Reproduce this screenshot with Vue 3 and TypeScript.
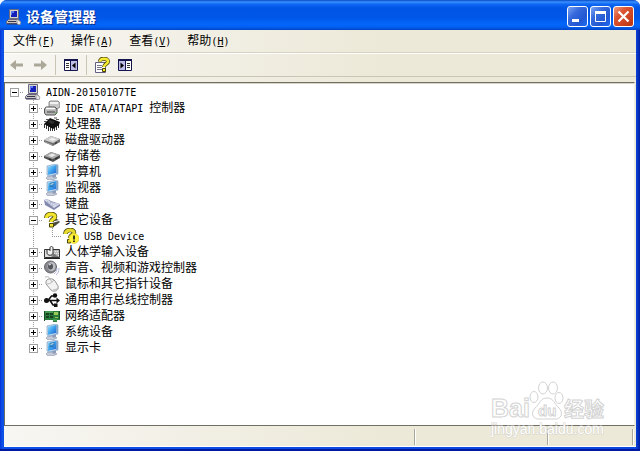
<script setup lang="ts">
import { computed, ref } from 'vue'

interface Device {
  id: number
  level: number
  icon: string
  latin?: string
  label?: string
  expandable: boolean
  parent?: number
}

const devices: Device[] = [
  { id: 0, level: 0, icon: 'pc', latin: 'AIDN-20150107TE', expandable: true },
  { id: 1, level: 1, icon: 'ide', latin: 'IDE ATA/ATAPI ', label: '控制器', expandable: true, parent: 0 },
  { id: 2, level: 1, icon: 'cpu', label: '处理器', expandable: true, parent: 0 },
  { id: 3, level: 1, icon: 'disk', label: '磁盘驱动器', expandable: true, parent: 0 },
  { id: 4, level: 1, icon: 'volume', label: '存储卷', expandable: true, parent: 0 },
  { id: 5, level: 1, icon: 'computer', label: '计算机', expandable: true, parent: 0 },
  { id: 6, level: 1, icon: 'monitor', label: '监视器', expandable: true, parent: 0 },
  { id: 7, level: 1, icon: 'keyboard', label: '键盘', expandable: true, parent: 0 },
  { id: 8, level: 1, icon: 'other', label: '其它设备', expandable: true, parent: 0 },
  { id: 9, level: 2, icon: 'unknown', latin: 'USB Device', expandable: false, parent: 8 },
  { id: 10, level: 1, icon: 'hid', label: '人体学输入设备', expandable: true, parent: 0 },
  { id: 11, level: 1, icon: 'sound', label: '声音、视频和游戏控制器', expandable: true, parent: 0 },
  { id: 12, level: 1, icon: 'mouse', label: '鼠标和其它指针设备', expandable: true, parent: 0 },
  { id: 13, level: 1, icon: 'usb', label: '通用串行总线控制器', expandable: true, parent: 0 },
  { id: 14, level: 1, icon: 'network', label: '网络适配器', expandable: true, parent: 0 },
  { id: 15, level: 1, icon: 'computer', label: '系统设备', expandable: true, parent: 0 },
  { id: 16, level: 1, icon: 'monitor', label: '显示卡', expandable: true, parent: 0 },
]

const menus = [
  { label: '文件', key: 'F' },
  { label: '操作', key: 'A' },
  { label: '查看', key: 'V' },
  { label: '帮助', key: 'H' },
]

const open = ref<number[]>([0, 8])

function isOpen(id: number): boolean {
  return open.value.includes(id)
}

function toggle(id: number): void {
  open.value = isOpen(id) ? open.value.filter((n) => n !== id) : [...open.value, id]
}

const visible = computed(() =>
  devices.filter((d) => {
    if (d.level === 0) return true
    if (d.level === 1) return isOpen(0)
    return isOpen(0) && isOpen(d.parent ?? 0)
  }),
)
</script>

<template>
  <div class="window">
    <svg class="defs" aria-hidden="true">
      <defs>
        <linearGradient id="screen" x1="0" y1="0" x2="1" y2="1">
          <stop offset="0" stop-color="#9be0fb" />
          <stop offset=".5" stop-color="#3fa4ee" />
          <stop offset="1" stop-color="#1d62cf" />
        </linearGradient>
        <symbol id="pc" viewBox="0 0 16 16">
          <path d="M3.500 .500h9v9h-9z" fill="#d8d5cc" stroke="#6c6a80" />
          <path d="M5 2h6v6H5z" fill="#1420b8" />
          <path d="M5 2h3v2H6v2H5z" fill="#5a78ef" />
          <path d="M2.500 10.500h10l1 2v2H.500v-2z" fill="#c9c6c4" stroke="#66647c" />
          <path d="M2 12.500h8M1 15h12" stroke="#38364f" />
          <path d="M11 10l4 3-1 3-3-1z" fill="#e6e4e4" stroke="#77757e" stroke-width=".6" />
        </symbol>
        <symbol id="ide" viewBox="0 0 16 16">
          <path d="M5 2l1-1h8l2 2v4l-3 2H5z" fill="#c9c9c9" stroke="#777" stroke-width=".8" />
          <path d="M6 3h8" stroke="#fff" stroke-width="1.500" />
          <path d="M2 7h9l2 2v4l-2 2H2L.5 13V9z" fill="#b5b5b5" stroke="#555" />
          <path d="M2 8.500h9" stroke="#fff" stroke-width="1.500" />
          <path d="M3 12h8" stroke="#565656" stroke-width="1.200" />
          <path d="M11 13h2" stroke="#5a9a52" />
        </symbol>
        <symbol id="cpu" viewBox="0 0 16 16">
          <path d="M.5 8v4M2.500 9v4M4.500 10v5M6.500 11v4M8.500 11v4M10.500 10v5M12.500 9v5M14.500 7v5" stroke="#333" />
          <path d="M6 2l10 4-1 3-6 4-9-5z" fill="#111" />
          <path d="M6 4l5 2-3 2-4-2z" fill="#303030" />
          <path d="M0 5.500h3M2 3.500h3M12 3.500h3M10 2h3" stroke="#555" />
        </symbol>
        <symbol id="disk" viewBox="0 0 16 16">
          <path d="M0 8l7-4 9 3v3l-7 4-9-4z" fill="#6f6f6f" />
          <path d="M0 8l7-4 9 3-7 4z" fill="#d0d0d0" />
          <path d="M5 7.500l3-1.500 4 1.300-3 1.500z" fill="#f4f4f4" />
          <path d="M1 10l7 3" stroke="#a0a0a0" />
          <path d="M11 11.500l2-1" stroke="#222" />
        </symbol>
        <symbol id="volume" viewBox="0 0 16 16">
          <path d="M0 8l7-4 9 3v3l-7 4-9-4z" fill="#505050" />
          <path d="M0 8l7-4 9 3-7 4z" fill="#aaa" />
          <path d="M4 7.500l4-2 4 1.600-4 2z" fill="#e9e9e9" />
          <path d="M5 11l2 1M11 11l3-1.500" stroke="#202020" />
        </symbol>
        <symbol id="computer" viewBox="0 0 16 16">
          <path d="M4 12h6l3 2-4 2H4l-2-2z" fill="#c5cbd9" stroke="#8991a6" stroke-width=".6" />
          <path d="M8 11l4-2v4l-3 1z" fill="#909db8" />
          <path d="M3 2l9-2 2 1v9L5 12l-2-1z" fill="#c9dcef" stroke="#6c94be" stroke-width=".6" />
          <path d="M4 2.700l8-1.700v8L4 10.700z" fill="url(#screen)" />
          <path d="M12 1l2 .5v8L12 10z" fill="#7fa6cf" />
        </symbol>
        <symbol id="monitor" viewBox="0 0 16 16">
          <path d="M4 12h6l3 2-4 2H4l-2-2z" fill="#c5cbd9" stroke="#8991a6" stroke-width=".6" />
          <path d="M8 11l4-2v4l-3 1z" fill="#909db8" />
          <path d="M3 2l9-2 2 1v9L5 12l-2-1z" fill="#c9dcef" stroke="#6c94be" stroke-width=".6" />
          <path d="M4 2.700l8-1.700v8L4 10.700z" fill="url(#screen)" />
          <path d="M6 3.500l4-1v2l-4 1zM5 7l5-1" fill="#d8f3ff" stroke="#1867a7" stroke-width=".8" />
          <path d="M12 1l2 .5v8L12 10z" fill="#7fa6cf" />
        </symbol>
        <symbol id="keyboard" viewBox="0 0 16 16">
          <path d="M0 4l3-1 4 2 9 3v2l-6 4-9-5z" fill="#8389ac" />
          <path d="M0 4l3-1 4 3 9 2-6 4z" fill="#d8dcec" />
          <path d="M3 5.500l7 4.500M2 6l7 5M6 6l7 3" stroke="#8a90ad" stroke-width=".8" stroke-dasharray="1 1" />
        </symbol>
        <symbol id="other" viewBox="0 0 16 16">
          <path d="M8 11l7-2 1 1-5 4-4 1zM10 6l5 2-4 1z" fill="#4d4d42" />
          <path d="M2.500 6c0-5 8.500-5 8.500-1.500 0 3-4 2.500-4 5.500" fill="none" stroke="#4a4400" stroke-width="4.600" />
          <path d="M2.500 6c0-5 8.500-5 8.500-1.500 0 3-4 2.500-4 5.500" fill="none" stroke="#f3e52e" stroke-width="3.200" />
          <path d="M5.500 11.500h4v3.500h-4z" fill="#f3e52e" stroke="#4a4400" />
        </symbol>
        <symbol id="unknown" viewBox="0 0 16 16">
          <path d="M2.500 6c0-5 8.500-5 8.500-1.500 0 3-4 2.500-4 5.500" fill="none" stroke="#4a4400" stroke-width="4.600" />
          <path d="M2.500 6c0-5 8.500-5 8.500-1.500 0 3-4 2.500-4 5.500" fill="none" stroke="#e6d92f" stroke-width="3.200" />
          <path d="M4.500 11.500h3V15h-3z" fill="#e6d92f" stroke="#4a4400" />
          <circle cx="11" cy="10.500" r="5" fill="#fff23a" stroke="#d1c126" stroke-width=".6" />
          <path d="M11 7.500v4M11 12.500v1.500" stroke="#111" stroke-width="1.600" />
        </symbol>
        <symbol id="hid" viewBox="0 0 16 16">
          <path d="M.5 5.500h15v8H.5z" fill="#b7b7b7" stroke="#333" />
          <path d="M9 7.500h6M10 9.500h5M12 11.500h3" stroke="#eee" stroke-dasharray="1 1" />
          <path d="M9 9l6 4H8z" fill="#777" />
          <path d="M1 6h6v7H1z" fill="#dedede" />
          <path d="M3 6v3c0 3 6 3 6 0V4c0-2-3-2-3 0v3" fill="#f1f1f1" stroke="#333" />
          <path d="M0 14.500h16" stroke="#222" />
        </symbol>
        <symbol id="sound" viewBox="0 0 16 16">
          <ellipse cx="6.500" cy="7" rx="6" ry="6" fill="#85858c" stroke="#66666b" />
          <ellipse cx="7.500" cy="6.500" rx="4" ry="4.500" fill="#bdbdc4" />
          <ellipse cx="6.500" cy="6.500" rx="2.500" ry="3" fill="#55555c" />
          <path d="M5 5l2-1" stroke="#fff" />
          <path d="M13 8c0 3-1 4-3 6M15 8c0 4-1 5-3 7" fill="none" stroke="#b5b5dc" />
        </symbol>
        <symbol id="mouse" viewBox="0 0 16 16">
          <path d="M1 1c4-1 5 1 5 3" fill="none" stroke="#b5b5b5" />
          <path d="M2 5c2-3 7-3 9 0l3 5c2 4-4 7-7 4L2 8z" fill="#f2f2f2" stroke="#999" />
          <path d="M3 8c3 0 6-2 7-4M6 3l2 3" fill="none" stroke="#aaa" stroke-width=".8" />
          <path d="M9 14c3 0 5-1 5-3" stroke="#c3c3c3" fill="none" stroke-width="1.500" />
        </symbol>
        <symbol id="usb" viewBox="0 0 16 16">
          <path d="M1 8.500h13M4 8.500L7.500 4H11M6 8.500L9 13h3" fill="none" stroke="#111" stroke-width="1.600" />
          <circle cx="2.500" cy="8.500" r="2.500" fill="#111" />
          <path d="M12.500 5.500L16 8.500l-3.500 3zM10 11.500h3.500V15H10z" fill="#111" />
          <circle cx="11" cy="3.500" r="2.200" fill="#111" />
        </symbol>
        <symbol id="network" viewBox="0 0 16 16">
          <path d="M0 3h16v9h-3v2H9v-2H0z" fill="#287b3b" />
          <path d="M2 5h3v2H2zM6 5h3v2H6zM2 8h3v2H2zM6 8h3v2H6z" fill="#173f20" />
          <path d="M10 4h4v3h-4zM11 9h3v1h-3z" fill="#9ac85a" />
          <path d="M1 4h8M9 12h4" stroke="#65b968" />
          <path d="M.5 3v10M15.500 3v8" stroke="#174f22" />
        </symbol>
      </defs>
    </svg>

    <header class="titlebar">
      <svg class="icon"><use href="#pc" /></svg>
      <h1 class="title">设备管理器</h1>
      <div class="controls">
        <button class="control" type="button" aria-label="最小化">
          <svg viewBox="0 0 19 19"><path d="M4 12h7v3H4z" fill="#fff" /></svg>
        </button>
        <button class="control" type="button" aria-label="最大化">
          <svg viewBox="0 0 19 19">
            <path d="M4.500 4.500h10v10h-10z" fill="none" stroke="#fff" />
            <path d="M4 4h11v3H4z" fill="#fff" />
          </svg>
        </button>
        <button class="control close" type="button" aria-label="关闭">
          <svg viewBox="0 0 19 19"><path d="M4.500 4.500l10 10M14.500 4.500l-10 10" stroke="#fff" stroke-width="2.200" /></svg>
        </button>
      </div>
    </header>

    <div class="client">
      <nav class="menubar">
        <button v-for="menu in menus" :key="menu.key" class="menu" type="button">
          {{ menu.label }}<span class="latin">(<u>{{ menu.key }}</u>)</span>
        </button>
      </nav>

      <div class="toolbar" role="toolbar">
        <button class="tool" type="button" aria-label="后退" disabled>
          <svg viewBox="0 0 16 16"><path d="M1 8l6-5v3.500h7v3H7V13z" fill="#aca899" /></svg>
        </button>
        <button class="tool" type="button" aria-label="前进" disabled>
          <svg viewBox="0 0 16 16"><path d="M15 8L9 3v3.500H2v3h7V13z" fill="#aca899" /></svg>
        </button>
        <span class="divider"></span>
        <button class="tool" type="button" aria-label="显示树">
          <svg viewBox="0 0 16 16">
            <path d="M1.500 2.500h13v11h-13z" fill="#fff" stroke="#15154e" />
            <path d="M1 2h14v2H1z" fill="#15154e" />
            <path d="M8 4h6v9H8z" fill="#bdbde6" />
            <path d="M7.500 4v9" stroke="#15154e" />
            <path d="M3 6.500h3M3 8.500h3M3 10.500h3" stroke="#333" />
            <path d="M12.500 5.500v6L9 8.500z" fill="#000" />
          </svg>
        </button>
        <span class="divider"></span>
        <button class="tool" type="button" aria-label="帮助">
          <svg viewBox="0 0 16 16">
            <path d="M1.500 5.500h10v10h-10z" fill="#fff" stroke="#625f82" />
            <path d="M3 8.500h5M3 10.500h5M3 12.500h7" stroke="#77748b" />
            <path d="M6 4.500c0-4 8-3.500 8 0 0 2.500-4 2.500-4 5.500" fill="none" stroke="#4a4400" stroke-width="4" />
            <path d="M6 4.500c0-4 8-3.500 8 0 0 2.500-4 2.500-4 5.500" fill="none" stroke="#f5e934" stroke-width="2.500" />
            <path d="M8.500 11.500h3v3h-3z" fill="#f5e934" stroke="#4a4400" />
          </svg>
        </button>
        <button class="tool" type="button" aria-label="操作窗格">
          <svg viewBox="0 0 16 16">
            <path d="M1.500 2.500h13v11h-13z" fill="#fff" stroke="#15154e" />
            <path d="M1 2h14v2H1z" fill="#15154e" />
            <path d="M2 4h6v9H2z" fill="#bdbde6" />
            <path d="M8.500 4v9" stroke="#15154e" />
            <path d="M10 6.500h3M10 8.500h3M10 10.500h3" stroke="#333" />
            <path d="M3.500 5.500v6L7 8.500z" fill="#000" />
          </svg>
        </button>
      </div>

      <main class="pane">
        <ul class="tree" role="tree">
          <li
            v-for="(device, index) in visible"
            :key="device.id"
            class="row"
            role="treeitem"
            :aria-level="device.level + 1"
          >
            <span v-if="device.level > 0" class="cell"></span>
            <span v-if="device.level > 1" class="cell rail"></span>
            <span
              class="cell branch"
              :class="{ rail: device.level === 1, last: index === visible.length - 1 || device.level === 2 }"
            >
              <button
                v-if="device.expandable"
                class="expander"
                :class="{ collapsed: !isOpen(device.id) }"
                type="button"
                :aria-label="isOpen(device.id) ? '折叠' : '展开'"
                @click="toggle(device.id)"
              ></button>
            </span>
            <svg class="icon"><use :href="'#' + device.icon" /></svg>
            <span class="name"><span v-if="device.latin" class="latin">{{ device.latin }}</span>{{ device.label }}</span>
          </li>
        </ul>
      </main>

      <footer class="status">
        <span class="panel wide"></span>
        <span class="panel medium"></span>
        <span class="panel small"></span>
      </footer>
    </div>

    <svg class="watermark" viewBox="0 0 120 60">
      <g class="mark">
        <text class="brand" x="0" y="37">Bai</text>
        <ellipse cx="43" cy="17" rx="4" ry="5.500" />
        <ellipse cx="52" cy="8" rx="4.500" ry="6" />
        <ellipse cx="62" cy="8" rx="4.500" ry="6" />
        <ellipse cx="68" cy="18" rx="4" ry="5.500" />
        <path d="M56 18c-7 0-7 6-12 10-5 5-2 12 5 11h14c7 1 10-6 5-11-5-4-5-10-12-10z" />
        <text class="du" x="47" y="36">du</text>
        <text class="suffix" x="73" y="37">经验</text>
      </g>
      <text class="site" x="0" y="54">jingyan.baidu.com</text>
    </svg>
  </div>
</template>

<style>
body {
  background: #f3f8ff;
}
</style>

<style scoped>
.window {
  position: relative;
  display: flex;
  flex-direction: column;
  box-sizing: border-box;
  min-height: 100vh;
  padding: 0 4px 4px;
  border-radius: 7px 7px 0 0;
  background: linear-gradient(90deg, #0831d9 0, #0c50e6 2px, #0c50e6 4px, #0c45dc calc(100% - 4px), #001ea0 100%);
  box-shadow: inset 0 -2px #0019a0;
  font-family: "Liberation Sans", "Noto Sans CJK SC", sans-serif;
  font-size: 12px;
  line-height: 16px;
  color: #000;
}
.defs {
  position: absolute;
  width: 0;
  height: 0;
}
.icon {
  flex: none;
  width: 16px;
  height: 16px;
}
.latin {
  font-family: "DejaVu Sans Mono", monospace;
  font-size: 10px;
  white-space: pre;
}
.titlebar {
  display: flex;
  align-items: center;
  box-sizing: border-box;
  height: 30px;
  margin: 0 -4px;
  padding: 3px 6px 0;
  border-radius: 7px 7px 0 0;
  background: linear-gradient(#0848c4 0, #3b91ff 2px, #1069f4 4px, #0055e5 8px, #0057e8 18px, #0466fb 24px, #0360f2 27px, #0144c5 30px);
}
.title {
  flex: 1;
  margin: 0 0 0 4px;
  font-size: 14px;
  font-weight: 700;
  line-height: 20px;
  color: #fff;
  text-shadow: 1px 1px #0b2f8c;
}
.controls {
  display: flex;
  gap: 2px;
}
.control {
  box-sizing: border-box;
  width: 21px;
  height: 21px;
  padding: 0;
  border: 1px solid #fff;
  border-radius: 3px;
  background: linear-gradient(135deg, #7ba4f5 0, #3569dc 35%, #2257d2 70%, #1b6cf5 100%);
}
.control svg {
  display: block;
  width: 19px;
  height: 19px;
}
.close {
  background: linear-gradient(135deg, #ee9c80 0, #dc5432 35%, #c8401d 75%, #b9340f 100%);
}
.client {
  display: flex;
  flex: 1;
  flex-direction: column;
  background: linear-gradient(90deg, #f7f6f2, #ece9d8 60%);
}
.menubar {
  display: flex;
  height: 22px;
  padding-left: 1px;
  border-bottom: 1px solid #d5d2c2;
}
.menu {
  padding: 0 8px;
  border: 0;
  background: none;
  font: inherit;
  color: inherit;
}
.toolbar {
  display: flex;
  align-items: center;
  height: 22px;
  padding-left: 5px;
  border-top: 1px solid #fff;
  border-bottom: 1px solid #cac6b5;
}
.tool {
  width: 16px;
  height: 16px;
  margin-right: 7px;
  padding: 0;
  border: 0;
  background: none;
}
.tool svg {
  display: block;
  width: 16px;
  height: 16px;
}
.divider {
  width: 1px;
  height: 20px;
  margin-right: 7px;
  background: #cac6b5;
}
.pane {
  flex: 1;
  margin: 5px 1px 0 0;
  border: 1px solid #716f64;
  border-right-color: #f1efe2;
  background: #fff;
  box-shadow: inset 0 1px #d8d5c8;
}
.tree {
  margin: 0;
  padding: 1px 0;
  list-style: none;
}
.row {
  display: flex;
  align-items: center;
  height: 16px;
}
.cell {
  display: grid;
  flex: none;
  place-items: center;
  width: 19px;
  height: 16px;
}
.branch {
  background: repeating-linear-gradient(90deg, #999 0 1px, transparent 1px 2px) 9px 8px / 10px 1px no-repeat;
}
.rail {
  background: repeating-linear-gradient(#999 0 1px, transparent 1px 2px) 9px 0 / 1px 16px no-repeat;
}
.branch.rail {
  background:
    repeating-linear-gradient(90deg, #999 0 1px, transparent 1px 2px) 9px 8px / 10px 1px no-repeat,
    repeating-linear-gradient(#999 0 1px, transparent 1px 2px) 9px 0 / 1px 16px no-repeat;
}
.branch.last {
  background:
    repeating-linear-gradient(90deg, #999 0 1px, transparent 1px 2px) 9px 8px / 10px 1px no-repeat,
    repeating-linear-gradient(#999 0 1px, transparent 1px 2px) 9px 0 / 1px 8px no-repeat;
}
.expander {
  width: 9px;
  height: 9px;
  padding: 0;
  border: 1px solid #a0a0a0;
  background: linear-gradient(#000, #000) center / 5px 1px no-repeat #fff;
}
.expander.collapsed {
  background:
    linear-gradient(#000, #000) center / 5px 1px no-repeat,
    linear-gradient(#000, #000) center / 1px 5px no-repeat,
    #fff;
}
.row .icon {
  margin-left: 1px;
}
.name {
  margin-left: 5px;
  white-space: nowrap;
}
.status {
  display: flex;
  box-sizing: border-box;
  height: 21px;
  padding: 3px 3px 1px 0;
  border-bottom: 1px solid #fff;
}
.panel {
  border-right: 1px solid #aca899;
  box-shadow: 1px 0 #fff;
}
.wide {
  flex: 411;
}
.medium {
  flex: 132;
}
.small {
  flex: 84;
}
.watermark {
  position: absolute;
  right: 29px;
  bottom: 11px;
  width: 120px;
  height: 60px;
  pointer-events: none;
}
.mark {
  fill: #fff;
  stroke: #d3d3d3;
  stroke-width: 1;
  font-family: "Liberation Sans", "Noto Sans CJK SC", sans-serif;
  font-weight: 700;
}
.brand {
  font-size: 25px;
}
.du {
  font-size: 15px;
}
.suffix {
  font-size: 20px;
}
.site {
  fill: #fff;
  stroke: #d3d1c8;
  stroke-width: 1px;
  paint-order: stroke;
  font-size: 14px;
}
</style>
